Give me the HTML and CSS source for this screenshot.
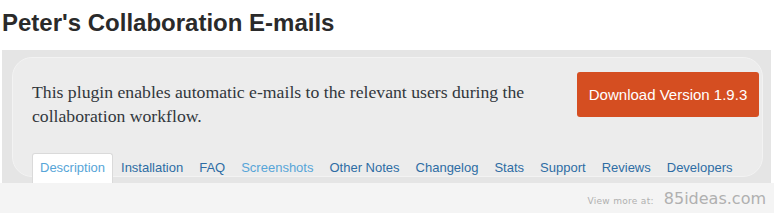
FILE: index.html
```html
<!DOCTYPE html>
<html lang="en">
<head>
<meta charset="utf-8">
<title>Peter's Collaboration E-mails</title>
<link rel="stylesheet" href="styles.css">
</head>
<body>
<header class="page-head">
  <h1 class="title">Peter's Collaboration E-mails</h1>
</header>
<section class="banner">
  <div class="panel">
    <div class="intro">
      <p class="summary">This plugin enables automatic e-mails to the relevant users during the collaboration workflow.</p>
      <a class="download" href="#">Download Version 1.9.3</a>
    </div>
    <nav class="tabs">
      <a class="tab active" href="#">Description</a>
      <a class="tab" href="#">Installation</a>
      <a class="tab" href="#">FAQ</a>
      <a class="tab light" href="#">Screenshots</a>
      <a class="tab" href="#">Other Notes</a>
      <a class="tab" href="#">Changelog</a>
      <a class="tab" href="#">Stats</a>
      <a class="tab" href="#">Support</a>
      <a class="tab" href="#">Reviews</a>
      <a class="tab" href="#">Developers</a>
    </nav>
  </div>
</section>
<footer class="strip">
  <span class="more">View more at:</span>
  <span class="site">85ideas.com</span>
</footer>
</body>
</html>
```

FILE: styles.css
```css
* { box-sizing: border-box; }
html, body { margin: 0; padding: 0; background: #ffffff; }
body { width: 774px; height: 213px; overflow: hidden; font-family: "Liberation Sans", Arial, sans-serif; }

.page-head { height: 50px; padding: 8px 0 12px 2px; }
.title {
  margin: 0;
  font-size: 24px;
  line-height: 30px;
  font-weight: bold;
  color: #2a2a2a;
}

.banner {
  margin: 0 3px 0 2px;
  padding: 7px 8px 6px 10px;
  background: #e5e5e5;
}
.panel {
  background: #ececec;
  border: 1px solid #f3f3f3;
  border-radius: 20px;
  padding: 14px 3px 0 19px;
}
.intro {
  display: flex;
  justify-content: space-between;
  align-items: flex-start;
}
.summary {
  margin: 8px 0 0 0;
  width: 530px;
  font-family: "Liberation Serif", "Times New Roman", serif;
  font-size: 17.7px;
  line-height: 24px;
  color: #32373c;
}
.download {
  display: flex;
  align-items: center;
  justify-content: center;
  flex-shrink: 0;
  width: 182px;
  height: 45px;
  background: #d54e21;
  border-radius: 3px;
  color: #ffffff;
  font-size: 15px;
  text-decoration: none;
}

.tabs {
  display: flex;
  margin: 25px 0 -7px 0;
}
.tab {
  display: block;
  flex-shrink: 0;
  white-space: nowrap;
  height: 30px;
  padding: 6px 7px 0 7px;
  border: 1px solid transparent;
  border-bottom: 0;
  border-radius: 3px 3px 0 0;
  font-size: 13px;
  line-height: 16px;
  color: #2e6ca4;
  text-decoration: none;
}
.tab.light { color: #57a5d8; }
.tab.active {
  background: #ffffff;
  border-color: #dadada;
  color: #57a5d8;
}

.strip {
  height: 30px;
  background: #f4f4f4;
  display: flex;
  justify-content: flex-end;
  align-items: baseline;
  padding: 3px 8px 0 0;
  color: #b0b0b0;
  font-family: "DejaVu Sans", Verdana, sans-serif;
}
.more { font-size: 9px; margin-right: 10px; letter-spacing: 0.3px; }
.site { font-size: 16px; line-height: 26px; }
```
